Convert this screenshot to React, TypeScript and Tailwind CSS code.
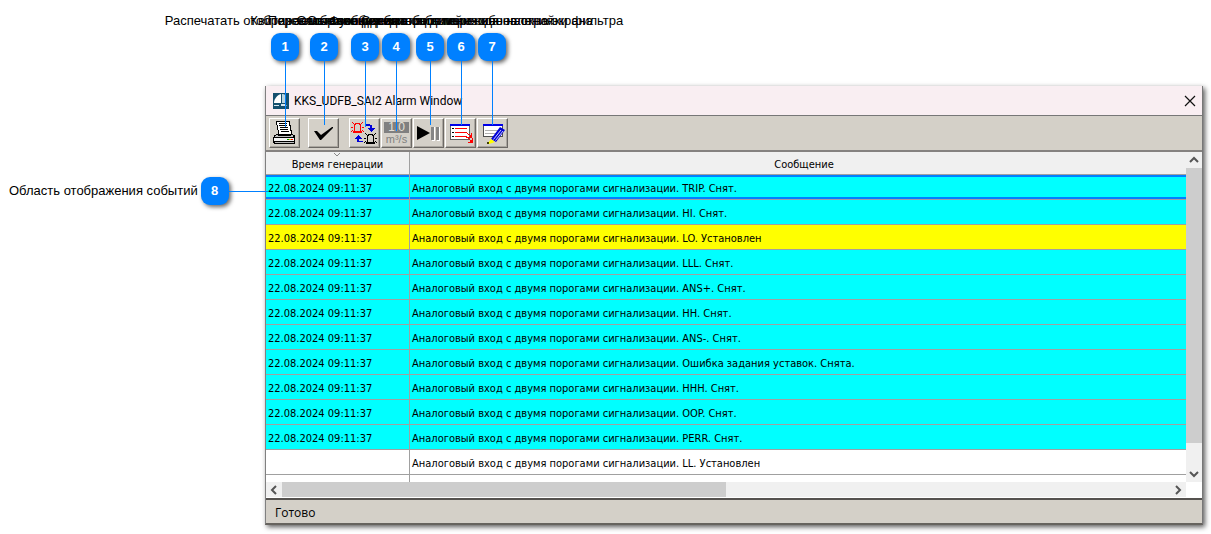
import type { ReactNode } from 'react'
import { clsx } from 'clsx'

type Callout = { label: string; gap: string; line: string }

const callouts: Callout[] = [
  { label: 'Распечатать отображаемые сообщения', gap: '', line: 'h-[66px]' },
  { label: 'Квитировать сообщения', gap: 'ml-[11px]', line: 'h-16' },
  { label: 'Переключение режима событий', gap: 'ml-[13px]', line: 'h-[66px]' },
  { label: 'Отображение единиц измерения', gap: 'ml-[3px]', line: 'h-[70px]' },
  { label: 'Остановка и возобновление обновления', gap: 'ml-[6px]', line: 'h-16' },
  { label: 'Функция быстрого перехода на окна экрана', gap: 'ml-[3px]', line: 'h-16' },
  { label: 'Сделать видимым окно настройки фильтра', gap: 'ml-[3px]', line: 'h-16' },
]

type AlarmRow = { time: string; message: string; state: 'cleared' | 'active' | 'empty' }

const TIME = '22.08.2024 09:11:37'
const PREFIX = 'Аналоговый вход с двумя порогами сигнализации. '

const alarms: AlarmRow[] = [
  { time: TIME, message: 'TRIP. Снят.', state: 'cleared' },
  { time: TIME, message: 'HI. Снят.', state: 'cleared' },
  { time: TIME, message: 'LO. Установлен', state: 'active' },
  { time: TIME, message: 'LLL. Снят.', state: 'cleared' },
  { time: TIME, message: 'ANS+. Снят.', state: 'cleared' },
  { time: TIME, message: 'HH. Снят.', state: 'cleared' },
  { time: TIME, message: 'ANS-. Снят.', state: 'cleared' },
  { time: TIME, message: 'Ошибка задания уставок. Снята.', state: 'cleared' },
  { time: TIME, message: 'HHH. Снят.', state: 'cleared' },
  { time: TIME, message: 'OOP. Снят.', state: 'cleared' },
  { time: TIME, message: 'PERR. Снят.', state: 'cleared' },
  { time: '', message: 'LL. Установлен', state: 'empty' },
]

const rowColors = {
  cleared: 'bg-[#00ffff]',
  active: 'bg-[#ffff00]',
  empty: 'bg-white',
}

function Badge({ children }: { children: ReactNode }) {
  return (
    <span className="flex h-7 w-7 shrink-0 items-center justify-center rounded-[9px] bg-[#0080ff] text-[13px] leading-4 font-bold text-white shadow-[2px_2px_4px_rgba(0,0,0,0.6)]">
      {children}
    </span>
  )
}

function ToolButton({
  label,
  className,
  children,
}: {
  label: string
  className?: string
  children: ReactNode
}) {
  return (
    <button
      type="button"
      aria-label={label}
      className={clsx(
        'flex h-[30px] w-[31px] shrink-0 flex-col items-center justify-center border border-t-white border-l-white border-r-[#6b6864] border-b-[#6b6864] bg-[#d4d0c8] shadow-[inset_-1px_-1px_0_#aaa69f]',
        className
      )}
    >
      {children}
    </button>
  )
}

function PrinterIcon() {
  return (
    <svg width="25" height="24" viewBox="-1 0 25 24" shapeRendering="crispEdges">
      <path d="M3 0h14v4h1v5h1v4H5V9H4V4H3z" fill="#000" />
      <path d="M4 1h12v4h1v5h1v3H6V9H5V4H4z" fill="#fff" />
      <path d="M6 2h8v1H6zM6 4h8v1H6zM7 6h8v1H7zM7 8h8v1H7zM8 10h8v1H8z" fill="#000" />
      <path d="M3 13h17v1h2v9H1v-1H0v-6h1v-2h2z" fill="#000" />
      <path d="M3 14h2v1h13v-1h2v2H2v-1h1z" fill="#c0c0c0" />
      <path d="M1 17h20v3H1z" fill="#f4f4f4" />
      <path d="M2 21h19v1H2z" fill="#c0c0c0" />
      <path d="M14 18h2v1h-2z" fill="#00a000" />
      <path d="M16 18h2v1h-2z" fill="#e0c000" />
      <path d="M18 18h2v1h-2z" fill="#f00" />
    </svg>
  )
}

function CheckIcon() {
  return (
    <svg width="25" height="24" viewBox="-1 0 25 24">
      <path d="M2 10h3l4 4L20 6h1v1L9 19H8z" fill="#000" />
    </svg>
  )
}

function Lamp({ color, x, y }: { color: string; x: number; y: number }) {
  return (
    <g transform={`translate(${x} ${y})`} fill={color}>
      <path
        d="M4 2h5v1h1v7h1v2H2v-2h1V3h1zM5 3v1H4v6h5V4H8V3z"
        fillRule="evenodd"
      />
      <path d="M0 6h2v1H0zM11 6h2v1h-2zM1 1h1v1H1zM2 2h1v1H2zM11 1h1v1h-1zM10 2h1v1h-1zM1 9h1v1H1zM0 10h1v1H0zM11 9h1v1h-1zM12 10h1v1h-1z" />
    </g>
  )
}

function SwitchLampsIcon() {
  return (
    <svg width="27" height="24" viewBox="0 0 27 24" shapeRendering="crispEdges">
      <Lamp color="#f00" x={0} y={0} />
      <Lamp color="#000" x={13} y={11} />
      <path d="M14 3h5v1h2v3h3v1h-1v1h-1v1h-1v1h-1v-1h-1V9h-1V8h-1V7h2V5h-5z" fill="#0000d8" />
      <path d="M7 14h1v1h1v1h1v1h1v1H8v2h4v1H6v-3H4v-1h1v-1h1v-1h1z" fill="#0000d8" />
    </svg>
  )
}

function PlayPauseIcon() {
  return (
    <svg width="25" height="24" viewBox="-1 0 25 24">
      <path d="M0 5l13 7-13 7z" fill="#000" />
      <path d="M17 6h1v14h-3v-1h2zM22 6h1v14h-3v-1h2z" fill="#fff" />
      <path d="M14 6h3v13h-3zM19 6h3v13h-3z" fill="#858585" />
    </svg>
  )
}

function EventListIcon() {
  return (
    <svg width="27" height="24" viewBox="-1 0 27 24" shapeRendering="crispEdges">
      <path d="M2 3h20v16H2z" fill="#606060" />
      <path d="M2 3h20v2H2z" fill="#0000e8" />
      <path d="M3 5h18v13H3z" fill="#fff" />
      <path d="M4 7h2v1H4zM4 11h2v1H4zM4 15h2v1H4z" fill="#000" />
      <path d="M7 7h12v1H7zM7 11h11v1H7zM7 15h11v1H7z" fill="#f00" />
      <path d="M18 11.500l6 4M18 15.500l6 5" stroke="#f00" fill="none" />
      <path d="M24 12v5h-4v-1h2v-1h1v-3zM25 17v5h-5v-1h2v-1h2v-3z" fill="#f00" />
    </svg>
  )
}

function EditFilterIcon() {
  return (
    <svg width="27" height="24" viewBox="-1 0 27 24">
      <path d="M3 3h20v13H3z" fill="#505050" />
      <path d="M4 5h18v10H4z" fill="#fff" />
      <path d="M3 3h20v2H3z" fill="#0000e8" />
      <path d="M5 9h13v1H5zM5 12h11v1H5z" fill="#b0b0b0" />
      <path d="M20 6l5 3-9 12-5-3z" fill="#0000d8" />
      <path d="M21 9l-7.500 9.500M23 10l-7.500 9.500" stroke="#fff" strokeWidth="0.800" />
      <path d="M11 18l4 3-6 2H8v-1z" fill="#ff0" />
      <path d="M7 21h2v2H7z" fill="#404000" />
    </svg>
  )
}

function AppLogo() {
  return (
    <svg width="16" height="16" viewBox="0 0 16 16">
      <path d="M0 0h16v16H0z" fill="#14506e" />
      <path d="M8 1v9H1c0-4 3-8 7-9z" fill="#fff" />
      <path d="M9 1c3 0 4 1 4 4v5H9z" fill="#b9d3df" />
      <path d="M1 12h5v1H1zM8 11h4l2 2H8z" fill="#d6e6ee" />
    </svg>
  )
}

const arrowPaths = {
  up: 'M4 10l4-4 4 4',
  down: 'M4 6l4 4 4-4',
  left: 'M10 4L6 8l4 4',
  right: 'M6 4l4 4-4 4',
}

function ScrollButton({ direction, label }: { direction: keyof typeof arrowPaths; label: string }) {
  return (
    <button type="button" aria-label={label} className="h-4 w-4 shrink-0">
      <svg width="16" height="16" viewBox="0 0 16 16">
        <path d={arrowPaths[direction]} fill="none" stroke="#555" strokeWidth="2" />
      </svg>
    </button>
  )
}

function AlarmTable() {
  return (
    <table className="w-full table-fixed border-separate border-spacing-0 font-['DejaVu_Sans_Condensed','Noto_Sans',sans-serif] text-[11px] leading-4">
      <colgroup>
        <col className="w-36" />
        <col />
      </colgroup>
      <thead>
        <tr className="h-[23px] bg-[#f0f0f0]">
          <th className="relative border-r border-b border-[#a0a0a0] px-0 pt-[3px] pb-0 font-normal">
            <svg className="absolute top-0 left-[67px]" width="8" height="5" viewBox="0 0 8 5">
              <path d="M1 1l3 3 3-3" fill="none" stroke="#888" />
            </svg>
            Время генерации
          </th>
          <th className="border-b border-[#a0a0a0] pt-[3px] pr-0 pb-0 pl-3 font-normal">
            Сообщение
          </th>
        </tr>
      </thead>
      <tbody>
        {alarms.map((row, i) => (
          <tr key={row.message} className={clsx('h-[25px]', rowColors[row.state])}>
            <td
              className={clsx(
                'border-r border-b border-[#a0a0a0] pt-[3px] pr-0 pb-0 pl-[2px]',
                i === 0 && 'shadow-[inset_0_2px_0_#0080ff,inset_0_-2px_0_#0080ff]'
              )}
            >
              {row.time}
            </td>
            <td
              className={clsx(
                'border-b border-[#a0a0a0] pt-[3px] pr-0 pb-0 pl-[2px] whitespace-nowrap',
                i === 0 && 'shadow-[inset_0_2px_0_#0080ff,inset_0_-2px_0_#0080ff]'
              )}
            >
              {PREFIX}
              {row.message}
            </td>
          </tr>
        ))}
        <tr className="h-[25px] bg-white">
          <td className="border-r border-[#a0a0a0] p-0" />
          <td className="p-0" />
        </tr>
      </tbody>
    </table>
  )
}

function AlarmWindow() {
  return (
    <section className="min-w-0 flex-1 border-r border-b-2 border-l border-r-[#777] border-b-[#66635e] border-l-[#808080] bg-white shadow-[2px_2px_5px_rgba(0,0,0,0.65)]">
      <header className="flex h-[30px] items-center border-b border-[#777] bg-[#f9eef2] pr-[6px] pl-[7px]">
        <AppLogo />
        <h1 className="ml-[5px] font-['Roboto','Open_Sans',sans-serif] text-[12px] leading-4">
          KKS_UDFB_SAI2 Alarm Window
        </h1>
        <button type="button" aria-label="Закрыть" className="ml-auto">
          <svg width="12" height="12" viewBox="0 0 12 12">
            <path d="M1 1l10 10M11 1L1 11" stroke="#111" strokeWidth="1.200" />
          </svg>
        </button>
      </header>

      <div className="flex h-9 items-start gap-px border-b-2 border-[#858280] bg-[#d4d0c8] px-[3px] pt-[2px]">
        <ToolButton label="Печать">
          <PrinterIcon />
        </ToolButton>
        <ToolButton label="Квитировать" className="ml-[7px]">
          <CheckIcon />
        </ToolButton>
        <ToolButton label="Переключить" className="ml-[9px]">
          <SwitchLampsIcon />
        </ToolButton>
        <ToolButton label="Единицы измерения">
          <span className="h-[11px] w-[25px] bg-[#808080] font-['Liberation_Sans',sans-serif] text-[12px] leading-[11px] text-[#e4e0d8]">
            1.0
          </span>
          <span className="font-['Liberation_Sans',sans-serif] text-[11px] leading-3 text-[#808080]">
            m³/s
          </span>
        </ToolButton>
        <ToolButton label="Пауза">
          <PlayPauseIcon />
        </ToolButton>
        <ToolButton label="Список событий">
          <EventListIcon />
        </ToolButton>
        <ToolButton label="Фильтр">
          <EditFilterIcon />
        </ToolButton>
      </div>

      <div className="flex h-[330px]">
        <div className="min-w-0 flex-1 overflow-hidden">
          <AlarmTable />
        </div>
        <div className="flex w-4 flex-col bg-[#f0f0f0]">
          <ScrollButton direction="up" label="Вверх" />
          <div className="flex-1">
            <div className="h-12/13 bg-[#cdcdcd]" />
          </div>
          <ScrollButton direction="down" label="Вниз" />
        </div>
      </div>

      <div className="mr-4 mb-px flex h-[15px] bg-[#f0f0f0]">
        <ScrollButton direction="left" label="Влево" />
        <div className="flex-1">
          <div className="h-full w-1/2 bg-[#cdcdcd]" />
        </div>
        <ScrollButton direction="right" label="Вправо" />
      </div>

      <footer className="flex h-[25px] items-center border-t-2 border-[#55524f] bg-[#d4d0c8] pt-[2px] pl-[9px] font-['Open_Sans','Noto_Sans',sans-serif] text-[12px] leading-4">
        Готово
      </footer>
    </section>
  )
}

export default function App() {
  return (
    <main className="min-h-screen overflow-hidden bg-white pt-[13px] pb-2 font-['Liberation_Sans',Arial,sans-serif] text-[13px] leading-4 text-black">
      <ol className="relative z-10 mb-[25px] flex pl-[271px]">
        {callouts.map((item, i) => (
          <li
            key={item.label}
            className={clsx('relative flex w-7 shrink-0 flex-col items-center gap-1', item.gap)}
          >
            <span className="whitespace-nowrap">{item.label}</span>
            <Badge>{i + 1}</Badge>
            <span className={clsx('absolute top-full left-[14px] w-px bg-[#0080ff]', item.line)} />
          </li>
        ))}
      </ol>

      <div className="flex pr-2">
        <div className="relative z-10 flex w-[265px] shrink-0 items-center self-start pt-[91px] pl-[9px]">
          <span className="mr-[3px] whitespace-nowrap">Область отображения событий</span>
          <Badge>8</Badge>
          <span className="-mr-[3px] h-px flex-1 bg-[#0080ff]" />
        </div>
        <AlarmWindow />
      </div>
    </main>
  )
}
